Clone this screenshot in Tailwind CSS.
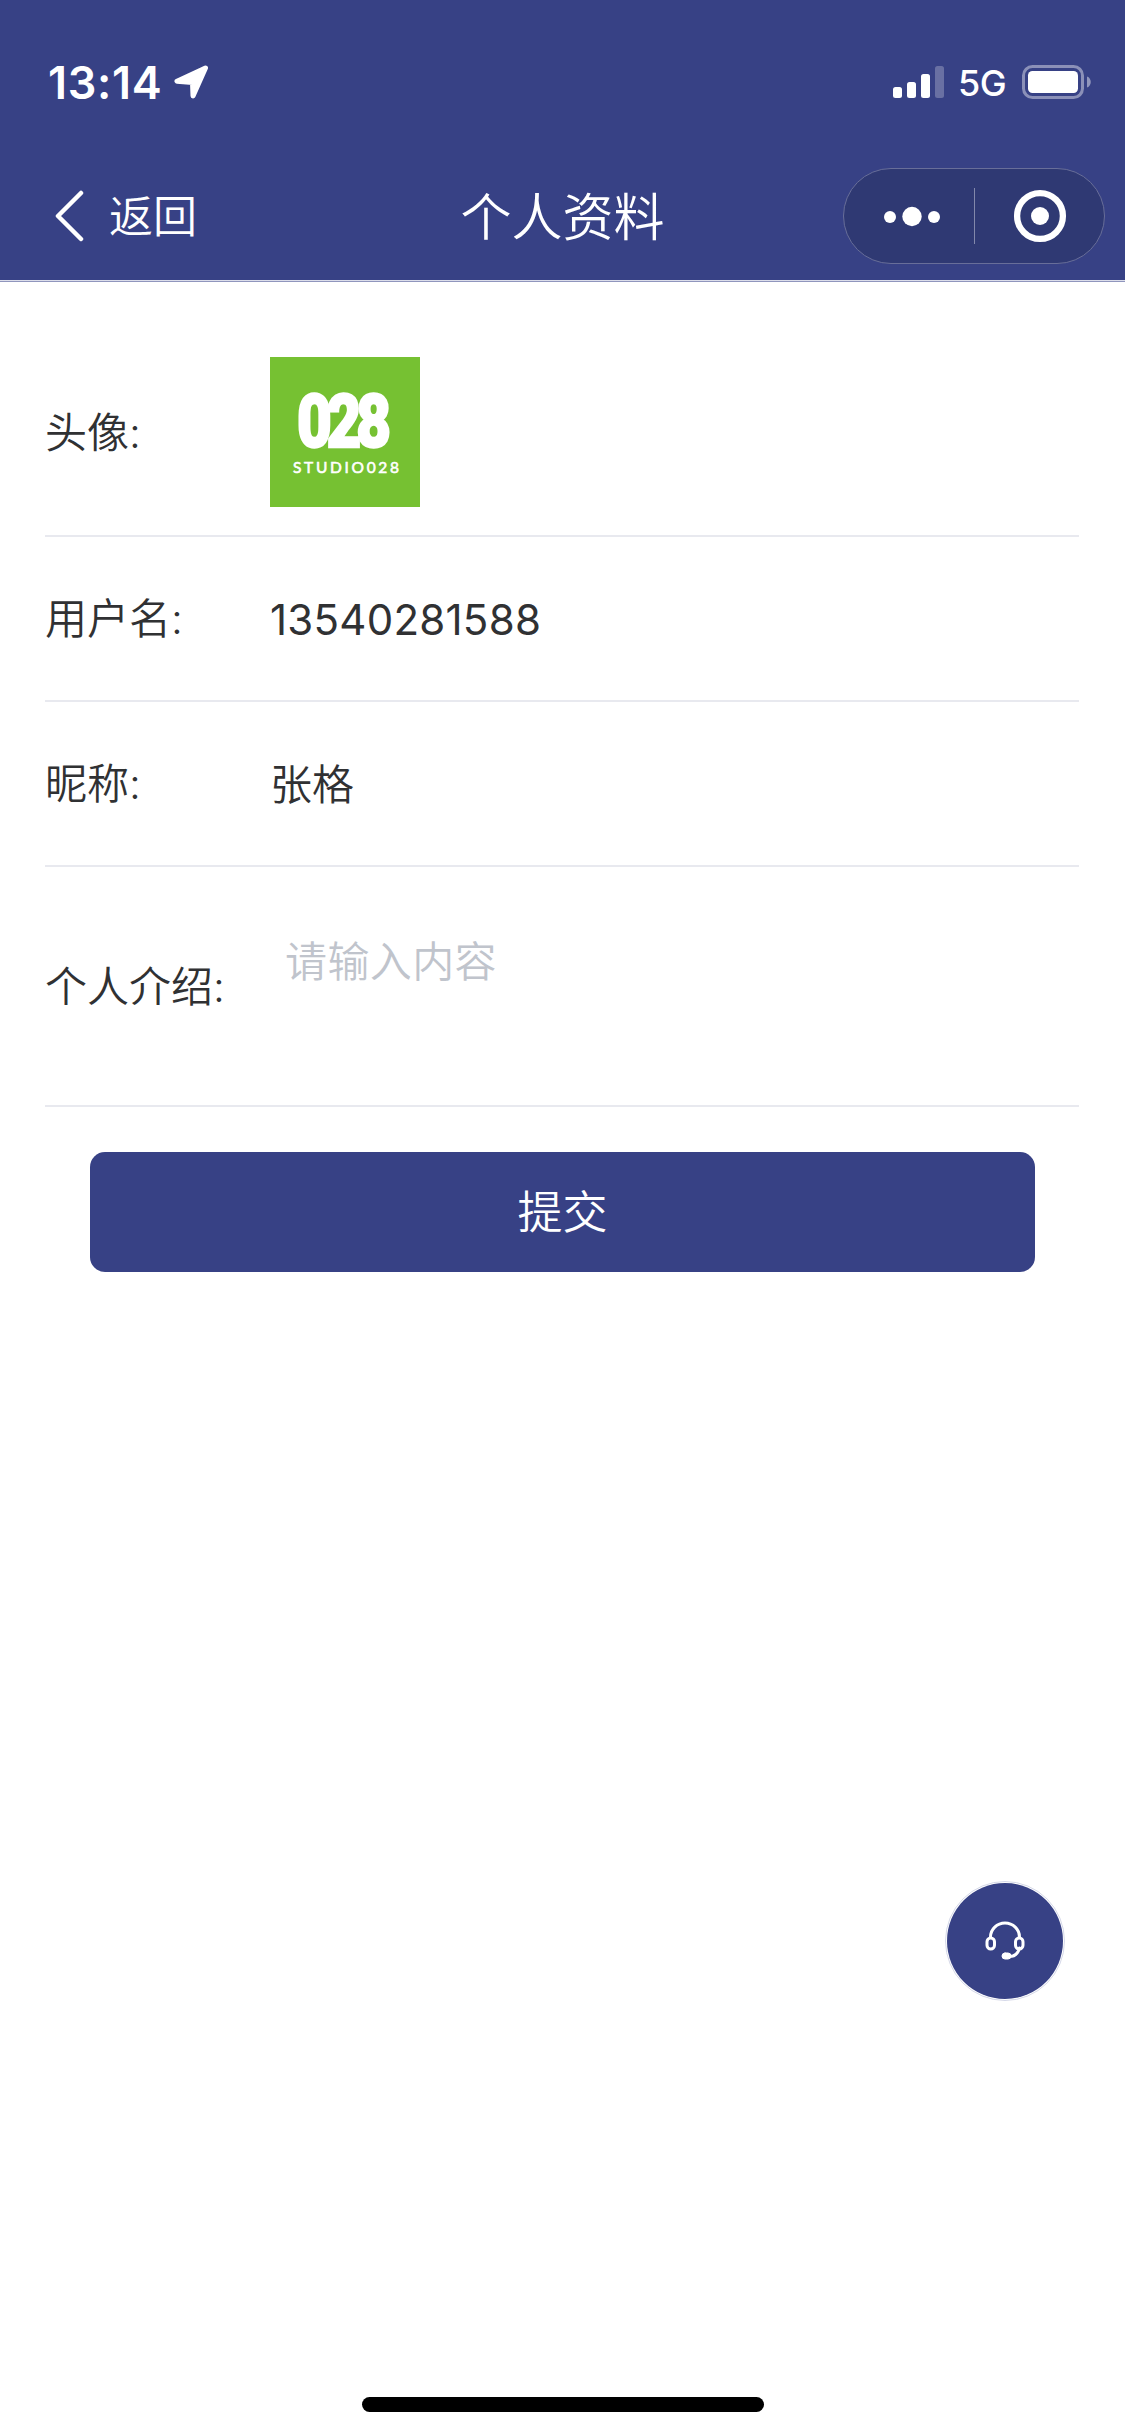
<!DOCTYPE html>
<html lang="zh-CN">
<head>
<meta charset="utf-8">
<title>个人资料</title>
<script src="https://cdn.jsdelivr.net/npm/@tailwindcss/browser@4"></script>
</head>
<body class="relative h-[2436px] w-[1125px] overflow-hidden bg-white font-['Inter','Noto_Sans_CJK_SC',sans-serif] text-[42px] font-[350] text-[#303133]">

<header class="h-[282px] border-b border-[#9096bd] bg-[#374185] text-white shadow-[inset_0_-1px_#dcdeeb]">
  <!-- Status bar -->
  <div class="flex h-[164px] items-center pl-12 pr-[33px]">
    <span class="w-[118px] whitespace-nowrap text-[45px] font-semibold leading-none tracking-[0.7px]">13:14</span>
    <svg class="ml-2 h-9 w-9" viewBox="0 0 36 36" fill="#fff" stroke="#fff" stroke-width="5" stroke-linejoin="round"><path d="M31.500 4 3 17.300 18.500 18.500 19 32Z"/></svg>
    <svg class="ml-auto h-8 w-[51px]" viewBox="0 0 51 32" fill="#fff"><rect y="21" width="9" height="11" rx="2.500"/><rect x="14" y="16" width="9" height="16" rx="2.500"/><rect x="28" y="8" width="9" height="24" rx="2.500"/><rect x="42" width="9" height="32" rx="2.500" opacity=".25"/></svg>
    <span class="ml-[14px] mt-0.5 w-[49px] whitespace-nowrap text-[36px] font-[450] leading-none tracking-[-0.5px]">5G</span>
    <svg class="ml-[15px] h-[34px] w-[70px]" viewBox="0 0 70 34"><rect x="1.500" y="1.500" width="59" height="31" rx="9" fill="none" stroke="#fff" stroke-opacity=".42" stroke-width="3"/><rect x="6" y="6" width="50" height="22" rx="4.500" fill="#fff"/><path d="M65 11.500c5 1.500 5 9.500 0 11Z" fill="#fff" opacity=".45"/></svg>
  </div>
  <!-- Navigation bar -->
  <nav class="grid h-[104px] grid-cols-[1fr_auto_1fr] items-center">
    <div class="flex items-center pl-[54px]">
      <svg class="h-[52px] w-[30px]" viewBox="0 0 30 52" fill="none" stroke="#fff" stroke-width="4.500" stroke-linecap="round" stroke-linejoin="round"><path d="M27 3 4 26l23 23"/></svg>
      <span class="ml-[25px] mt-px text-[44px] leading-none">返回</span>
    </div>
    <h1 class="mt-0.5 text-[51px] font-[350] leading-none">个人资料</h1>
    <div class="ml-auto mr-5 flex h-24 w-[262px] items-center rounded-full border border-[#686e99] bg-[#2f3973]">
      <svg class="h-full w-[260px]" viewBox="0 0 260 94" fill="#fff"><circle cx="46" cy="48" r="6"/><circle cx="68" cy="47.500" r="9.700"/><circle cx="90" cy="48" r="6"/><path d="M130 19h1v56h-1z" opacity=".4"/><circle cx="196" cy="47" r="22.900" fill="none" stroke="#fff" stroke-width="6.300"/><circle cx="196" cy="47" r="9"/></svg>
    </div>
  </nav>
</header>

<main class="pl-[45px] pr-[46px] pt-12">
  <div class="flex h-[207px] items-center border-b-2 border-[#e8e9ef]">
    <span class="w-[225px]">头像:</span>
    <svg class="mb-px h-[150px] w-[150px] bg-[#76c132]" viewBox="0 0 150 150" fill="#fff">
      <text transform="translate(27 89.500) scale(.8 1)" font-family="Roboto" font-weight="900" font-size="75" letter-spacing="-6.500" stroke="#fff" stroke-width="2.500">028</text>
      <text x="23" y="115.500" font-family="Lato" font-weight="400" font-size="15.500" textLength="106" stroke="#fff" stroke-width=".6">STUDIO028</text>
    </svg>
  </div>
  <div class="flex h-[165px] items-center border-b-2 border-[#e8e9ef]">
    <span class="w-[225px]">用户名:</span>
    <span class="mt-px font-normal tracking-[0.25px]">13540281588</span>
  </div>
  <div class="flex h-[165px] items-center border-b-2 border-[#e8e9ef]">
    <span class="w-[225px]">昵称:</span>
    <span class="mt-0.5">张格</span>
  </div>
  <div class="flex h-[240px] items-center border-b-2 border-[#e8e9ef]">
    <span class="w-[225px]">个人介绍:</span>
    <span class="mb-[49px] pl-[15px] tracking-[0.4px] text-[#c0c4cc]">请输入内容</span>
  </div>
  <button class="ml-[45px] mt-[45px] block h-[120px] w-[945px] rounded-[15px] bg-[#374185] pt-px text-[45px] text-white">提交</button>
</main>

<!-- Customer service button floating over the page -->
<div class="absolute left-[945px] top-[1881px] flex h-[120px] w-[120px] items-center justify-center rounded-full border border-[#d5d8e8] bg-white">
  <div class="flex h-[116px] w-[116px] shrink-0 items-center justify-center rounded-full bg-[#374185]">
    <svg class="h-10 w-10" viewBox="0 0 40 40" fill="none" stroke="#fff" stroke-width="3" stroke-linecap="round"><path d="M5.500 16a14.500 14 0 0 1 29 0M34.500 27c-1.500 6-5 8.500-10 8.500"/><rect x="2" y="17" width="7.500" height="11" rx="3.700"/><rect x="30.500" y="17" width="7.500" height="11" rx="3.700"/><rect x="17" y="32" width="9" height="6" rx="3" fill="#fff" stroke-width="1"/></svg>
  </div>
</div>

<!-- Home indicator -->
<div class="absolute left-[362px] top-[2397px] h-[15px] w-[402px] rounded-full bg-black"></div>
</body>
</html>
